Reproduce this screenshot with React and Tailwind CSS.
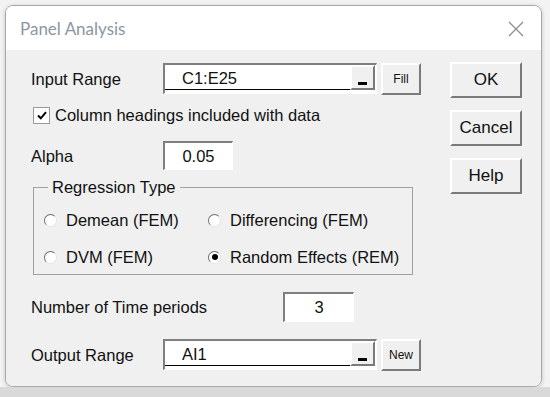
import React from "react";

const raised =
  "bg-[#f0f0f0] border-t-2 border-l-2 border-b-2 border-r-2 border-t-white border-l-white border-b-[#7a7a7a] border-r-[#7a7a7a]";
const sunken =
  "bg-white border-t-2 border-l-2 border-b border-r border-t-[#7f7f7f] border-l-[#7f7f7f] border-b-white border-r-white";

const RefEdit = ({ value, extra }) => (
  <div className="flex items-start gap-[4px]">
    <div className={`${sunken} h-[31px] w-[214px] flex items-start`}>
      <div className="flex-1 h-[25px] border-b border-black pl-[17px] flex items-end leading-none pb-[3px]">
        {value}
      </div>
      <button className={`${raised} w-[25px] h-[25px] mr-[1px] flex items-end justify-center pb-[3px]`}>
        <span className="block w-[9px] h-[3px] bg-black" />
      </button>
    </div>
    <button className={`${raised} w-[40px] h-[32px] text-[12px] leading-none flex items-center justify-center`}>
      {extra}
    </button>
  </div>
);

const Radio = ({ label, checked }) => (
  <div className="flex items-center h-[24px] gap-[9px]">
    <span className="w-[13px] h-[13px] rounded-full bg-white border border-t-[#6d6d6d] border-l-[#6d6d6d] border-b-[#e6e6e6] border-r-[#e6e6e6] flex items-center justify-center">
      {checked && <span className="block w-[6px] h-[6px] rounded-full bg-black" />}
    </span>
    <span>{label}</span>
  </div>
);

export default function App() {
  return (
    <div className="w-[550px] h-[397px] bg-[#f3f3f3] flex flex-col overflow-hidden" style={{ fontFamily: '"Liberation Sans", Arial, sans-serif' }}>
      <div className="pt-[5px] pl-[5px]">
        <div className="w-[537px] h-[382px] rounded-[8px] border border-[#a8a8a8] overflow-hidden flex flex-col shadow-[0_1px_4px_rgba(0,0,0,0.2)]">
          {/* Title bar */}
          <div className="h-[44px] bg-white flex items-center justify-between pl-[14px] pr-[17px]">
            <span className="text-[17px] text-[#8d96a3] pt-[1px]" style={{ fontFamily: "Lato, sans-serif" }}>
              Panel Analysis
            </span>
            <svg width="16" height="16" viewBox="0 0 16 16" className="mt-[1px]">
              <path d="M1 1 L15 15 M15 1 L1 15" stroke="#8a8a8a" strokeWidth="1.2" fill="none" />
            </svg>
          </div>

          {/* Body */}
          <div className="flex-1 bg-[#f0f0f0] flex pl-[25px] text-[16.5px] text-[#111]">
            <div className="w-[390px] flex flex-col pt-[12px]">
              <div className="flex items-center h-[32px] pt-[2px]">
                <span className="w-[132px]">Input Range</span>
                <RefEdit value="C1:E25" extra="Fill" />
              </div>

              <div className="flex items-center h-[19px] mt-[12px] pl-[2px] gap-[5px]">
                <span className="w-[17px] h-[17px] bg-white border border-[#9a9a9a] flex items-center justify-center">
                  <svg width="10" height="9" viewBox="0 0 10 9">
                    <path d="M1 4.5 L3.8 7.3 L9 1.2" stroke="#000" strokeWidth="2" fill="none" />
                  </svg>
                </span>
                <span>Column headings included with data</span>
              </div>

              <div className="flex items-center h-[29px] mt-[16px]">
                <span className="w-[132px] pt-[2px]">Alpha</span>
                <div className={`${sunken} w-[70px] h-[29px] flex items-center justify-center`}>0.05</div>
              </div>

              <div className="relative ml-[2px] mt-[17px] w-[380px] h-[88px] border border-[#a0a0a0]">
                <span className="absolute -top-[11px] left-[14px] px-[4px] bg-[#f0f0f0] leading-[20px]">
                  Regression Type
                </span>
                <div className="grid grid-cols-[164px_auto] gap-y-[13px] pl-[10px] pt-[20px]">
                  <Radio label="Demean (FEM)" />
                  <Radio label="Differencing (FEM)" />
                  <Radio label="DVM (FEM)" />
                  <Radio label="Random Effects (REM)" checked />
                </div>
              </div>

              <div className="flex items-center h-[30px] mt-[17px]">
                <span className="w-[252px]">Number of Time periods</span>
                <div className={`${sunken} w-[71px] h-[30px] flex items-center justify-center`}>3</div>
              </div>

              <div className="flex items-center h-[30px] mt-[18px]">
                <span className="w-[132px]">Output Range</span>
                <RefEdit value="AI1" extra="New" />
              </div>
            </div>

            <div className="flex flex-col gap-[12px] pt-[12px] ml-[29px]">
              <button className={`${raised} w-[72px] h-[36px] text-[17px]`}>OK</button>
              <button className={`${raised} w-[72px] h-[36px] text-[17px]`}>Cancel</button>
              <button className={`${raised} w-[72px] h-[36px] text-[17px]`}>Help</button>
            </div>
          </div>
        </div>
      </div>
      <div className="flex-1 bg-[#d9d9d9]" />
    </div>
  );
}
